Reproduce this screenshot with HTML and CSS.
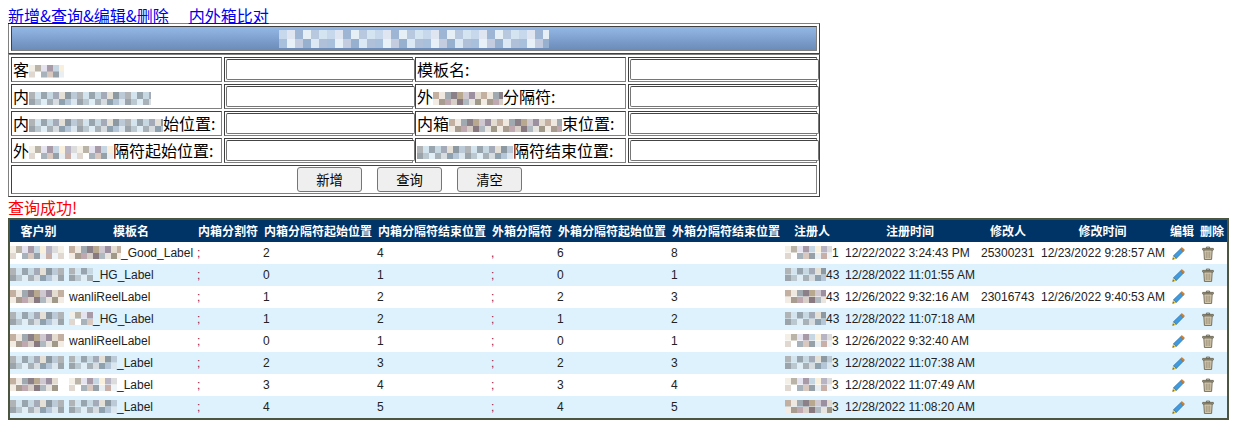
FILE: index.html
```html
<!DOCTYPE html>
<html lang="zh">
<head>
<meta charset="utf-8">
<title>内外箱标签</title>
<link rel="stylesheet" href="styles.css">
</head>
<body>
<svg class="defs" width="0" height="0" aria-hidden="true">
  <symbol id="pencil" viewBox="0 0 13 13">
    <path d="M.6 12.4 L1.6 8.6 L4.4 11.4 Z" fill="#f2d23c" stroke="#a88a20" stroke-width=".5"/>
    <path d="M1.6 8.6 L8.6 1.8 L11.2 4.4 L4.4 11.4 Z" fill="#3f9be0" stroke="#2a6ea8" stroke-width=".6"/>
    <path d="M8.6 1.8 L10 .5 L12.5 3 L11.2 4.4 Z" fill="#d9822b" stroke="#8f5a22" stroke-width=".5"/>
    <path d="M.6 12.4 L1 10.9 L2.1 12 Z" fill="#3a3a3a"/>
  </symbol>
  <symbol id="trash" viewBox="0 0 12 14">
    <path d="M4.4 1 H7.6 V2.4 H4.4 Z" fill="#e6dcc4" stroke="#55503f" stroke-width=".7"/>
    <path d="M.7 2.4 H11.3 V4 H.7 Z" fill="#d8ccb0" stroke="#55503f" stroke-width=".8"/>
    <path d="M1.8 4 H10.2 L9.6 13.4 H2.4 Z" fill="#dacfb4" stroke="#55503f" stroke-width=".8"/>
    <path d="M4.2 5.5 V12 M6 5.5 V12 M7.8 5.5 V12" stroke="#8a8068" stroke-width=".8" fill="none"/>
  </symbol>
</svg>

<nav class="links"><a href="#">新增&amp;查询&amp;编辑&amp;删除</a><a href="#">内外箱比对</a></nav>

<table class="form-box title-box">
  <tr><th class="title"><span class="mosaic m-title"></span></th></tr>
</table>

<table class="form-box">
  <colgroup><col class="c-label"><col class="c-input"><col class="c-label"><col class="c-input"></colgroup>
  <tr>
    <td>客<span class="mosaic m1 w35"></span></td><td><input type="text"></td>
    <td>模板名:</td><td><input type="text"></td>
  </tr>
  <tr>
    <td>内<span class="mosaic m2 w122"></span></td><td><input type="text"></td>
    <td>外<span class="mosaic m3 w70"></span>分隔符:</td><td><input type="text"></td>
  </tr>
  <tr>
    <td>内<span class="mosaic m2 w134"></span>始位置:</td><td><input type="text"></td>
    <td>内箱<span class="mosaic m3 w113"></span>束位置:</td><td><input type="text"></td>
  </tr>
  <tr>
    <td>外<span class="mosaic m1 w84"></span>隔符起始位置:</td><td><input type="text"></td>
    <td><span class="mosaic m2 w96"></span>隔符结束位置:</td><td><input type="text"></td>
  </tr>
  <tr>
    <td colspan="4" class="actions">
      <div class="btn-row"><button type="button">新增</button><button type="button">查询</button><button type="button">清空</button></div>
    </td>
  </tr>
</table>

<p class="status">查询成功!</p>

<table class="grid">
  <colgroup>
    <col class="g0"><col class="g1"><col class="g2"><col class="g3"><col class="g3"><col class="g2"><col class="g3"><col class="g3"><col class="g8"><col class="g9"><col class="g10"><col class="g11"><col class="g12"><col class="g13">
  </colgroup>
  <thead>
    <tr><th>客户别</th><th>模板名</th><th>内箱分割符</th><th>内箱分隔符起始位置</th><th>内箱分隔符结束位置</th><th>外箱分隔符</th><th>外箱分隔符起始位置</th><th>外箱分隔符结束位置</th><th>注册人</th><th>注册时间</th><th>修改人</th><th>修改时间</th><th>编辑</th><th>删除</th></tr>
  </thead>
  <tbody>
    <tr><td><span class="mosaic m1 w54"></span></td><td><span class="mosaic m3 w52"></span>_Good_Label</td><td class="sep">;</td><td>2</td><td>4</td><td class="sep">,</td><td>6</td><td>8</td><td><span class="mosaic m1 w47"></span>1</td><td>12/22/2022 3:24:43 PM</td><td>25300231</td><td>12/23/2022 9:28:57 AM</td><td><svg class="ic-pencil"><use href="#pencil"/></svg></td><td><svg class="ic-trash"><use href="#trash"/></svg></td></tr>
    <tr><td><span class="mosaic m2 w54"></span></td><td><span class="mosaic m2 w24"></span>_HG_Label</td><td class="sep">;</td><td>0</td><td>1</td><td class="sep">;</td><td>0</td><td>1</td><td><span class="mosaic m2 w41"></span>43</td><td>12/28/2022 11:01:55 AM</td><td></td><td></td><td><svg class="ic-pencil"><use href="#pencil"/></svg></td><td><svg class="ic-trash"><use href="#trash"/></svg></td></tr>
    <tr><td><span class="mosaic m3 w54"></span></td><td>wanliReelLabel</td><td class="sep">;</td><td>1</td><td>2</td><td class="sep">;</td><td>2</td><td>3</td><td><span class="mosaic m3 w41"></span>43</td><td>12/26/2022 9:32:16 AM</td><td>23016743</td><td>12/26/2022 9:40:53 AM</td><td><svg class="ic-pencil"><use href="#pencil"/></svg></td><td><svg class="ic-trash"><use href="#trash"/></svg></td></tr>
    <tr><td><span class="mosaic m2 w54"></span></td><td><span class="mosaic m1 w24"></span>_HG_Label</td><td class="sep">;</td><td>1</td><td>2</td><td class="sep">;</td><td>1</td><td>2</td><td><span class="mosaic m2 w41"></span>43</td><td>12/28/2022 11:07:18 AM</td><td></td><td></td><td><svg class="ic-pencil"><use href="#pencil"/></svg></td><td><svg class="ic-trash"><use href="#trash"/></svg></td></tr>
    <tr><td><span class="mosaic m3 w54"></span></td><td>wanliReelLabel</td><td class="sep">;</td><td>0</td><td>1</td><td class="sep">;</td><td>0</td><td>1</td><td><span class="mosaic m1 w47"></span>3</td><td>12/26/2022 9:32:40 AM</td><td></td><td></td><td><svg class="ic-pencil"><use href="#pencil"/></svg></td><td><svg class="ic-trash"><use href="#trash"/></svg></td></tr>
    <tr><td><span class="mosaic m2 w54"></span></td><td><span class="mosaic m2 w48"></span>_Label</td><td class="sep">;</td><td>2</td><td>3</td><td class="sep">;</td><td>2</td><td>3</td><td><span class="mosaic m2 w47"></span>3</td><td>12/28/2022 11:07:38 AM</td><td></td><td></td><td><svg class="ic-pencil"><use href="#pencil"/></svg></td><td><svg class="ic-trash"><use href="#trash"/></svg></td></tr>
    <tr><td><span class="mosaic m3 w48"></span></td><td><span class="mosaic m1 w48"></span>_Label</td><td class="sep">;</td><td>3</td><td>4</td><td class="sep">;</td><td>3</td><td>4</td><td><span class="mosaic m1 w47"></span>3</td><td>12/28/2022 11:07:49 AM</td><td></td><td></td><td><svg class="ic-pencil"><use href="#pencil"/></svg></td><td><svg class="ic-trash"><use href="#trash"/></svg></td></tr>
    <tr><td><span class="mosaic m2 w54"></span></td><td><span class="mosaic m2 w48"></span>_Label</td><td class="sep">;</td><td>4</td><td>5</td><td class="sep">;</td><td>4</td><td>5</td><td><span class="mosaic m3 w47"></span>3</td><td>12/28/2022 11:08:20 AM</td><td></td><td></td><td><svg class="ic-pencil"><use href="#pencil"/></svg></td><td><svg class="ic-trash"><use href="#trash"/></svg></td></tr>
  </tbody>
</table>
</body>
</html>
```

FILE: styles.css
```css
body {
  margin: 8px;
  font-family: "Noto Sans CJK SC", "Liberation Sans", sans-serif;
  font-size: 16px;
  line-height: 15px;
  color: #000;
  background: #fff;
}
.defs { position: absolute; }

.links { height: 15px; white-space: nowrap; }
.links a { color: #0000ee; text-decoration: underline; margin-right: 20px; }

.form-box {
  width: 812px;
  table-layout: fixed;
  border-collapse: separate;
  border-spacing: 2px;
  border: 1px solid;
  border-color: #808080 #404040 #404040 #808080;
}
.title-box { height: 30px; }
.form-box td, .form-box th {
  padding: 1px;
  border: 1px solid;
  border-color: #404040 #808080 #808080 #404040;
  height: 21px;
  white-space: nowrap;
  overflow: visible;
  box-sizing: content-box;
}
.form-box .title {
  height: 21px;
  text-align: center;
  background: linear-gradient(#94b8e6, #6b8bb8);
}
.c-label { width: 211px; }
.c-input { width: 189px; }
.form-box input {
  display: block;
  box-sizing: border-box;
  width: 189px;
  height: 21px;
  margin: 0;
  padding: 1px 2px;
  border: 1px solid #767676;
  border-top-color: #444;
  border-radius: 2px;
  background: #fff;
}
.form-box .actions { height: 25px; }
.btn-row {
  display: flex;
  justify-content: center;
  gap: 15px;
  padding-right: 9px;
}
button {
  width: 65px;
  height: 25px;
  padding: 0;
  font: 13.33px "Noto Sans CJK SC", sans-serif;
  color: #000;
  background: #efefef;
  border: 1px solid #767676;
  border-radius: 3px;
}

.status {
  margin: 0;
  height: 21px;
  line-height: 21px;
  color: #ff0000;
}

.grid {
  width: 1221px;
  table-layout: fixed;
  border-collapse: separate;
  border-spacing: 0;
  border: 2px solid #4b5540;
  font-family: "Liberation Sans", "Noto Sans CJK SC", sans-serif;
  font-size: 12px;
  line-height: 14px;
  color: #222;
}
.grid th, .grid td {
  height: 22px;
  padding: 0 2px;
  box-sizing: border-box;
  white-space: nowrap;
  vertical-align: middle;
}
.grid th {
  background: #003366;
  color: #fff;
  font-family: "Noto Sans CJK SC", sans-serif;
  font-weight: 700;
  text-align: center;
}
.grid th:nth-child(n+9) { padding: 0 4px 0 2px; }
.grid td { text-align: left; overflow: hidden; }
.grid td:first-child { padding-left: 0; }
.grid tbody tr:nth-child(even) td { background: #def2fd; }
.grid .sep { color: #8b1a4a; }
.g0 { width: 57px; }
.g1 { width: 128px; }
.g2 { width: 66px; }
.g3 { width: 114px; }
.g8 { width: 60px; }
.g9 { width: 136px; }
.g10 { width: 60px; }
.g11 { width: 129px; }
.g12 { width: 30px; }
.g13 { width: 29px; }

.ic-pencil { display: block; width: 13px; height: 13px; margin-left: 2px; }
.ic-trash { display: block; width: 12px; height: 14px; margin-left: 2px; }

.mosaic {
  display: inline-block;
  height: 13px;
  vertical-align: -2px;
  background-repeat: repeat-x;
  background-size: 48px 50%;
  background-position: 0 0, 0 100%;
}
.m1 {
  background-image:
    linear-gradient(90deg, #f4efe6 0 6px, #b9b3a8 6px 12px, #e6e3f0 12px 18px, #a89aa6 18px 24px, #c6d6e2 24px 30px, #f8f0dc 30px 36px, #b8b4c4 36px 42px, #dcdcdc 42px 48px),
    linear-gradient(90deg, #e0d8d0 0 6px, #fff 6px 12px, #a8b2ba 12px 18px, #d8c8c0 18px 24px, #96a0a8 24px 30px, #e8eef2 30px 36px, #c8b0a8 36px 42px, #eef4f8 42px 48px);
}
.m2 {
  background-image:
    linear-gradient(90deg, #b0b4b6 0 6px, #d4e4ee 6px 12px, #98a4ae 12px 18px, #c8d8e2 18px 24px, #a4aab8 24px 30px, #e4e0d8 30px 36px, #8c98a2 36px 42px, #bccad8 42px 48px),
    linear-gradient(90deg, #9aa4aa 0 6px, #bcc8d0 6px 12px, #e2eef6 12px 18px, #a8b0b8 18px 24px, #d6dce0 24px 30px, #8fa0ae 30px 36px, #b4c6d8 36px 42px, #dce6ee 42px 48px);
}
.m3 {
  background-image:
    linear-gradient(90deg, #c4b0a0 0 6px, #eee8e0 6px 12px, #a0a8b0 12px 18px, #8c8088 18px 24px, #b8a890 24px 30px, #d0c8d0 30px 36px, #9c90a0 36px 42px, #e4dcd0 42px 48px),
    linear-gradient(90deg, #f2ece4 0 6px, #a89c90 6px 12px, #c0a8b0 12px 18px, #d8d0c8 18px 24px, #887880 24px 30px, #b0b8c0 30px 36px, #e8e4e0 36px 42px, #a09888 42px 48px);
}
.m-title {
  width: 270px;
  height: 18px;
  vertical-align: middle;
  background-image:
    linear-gradient(90deg, #c8d8ec 0 8px, #dfe6f2 8px 16px, #9fb5d4 16px 24px, #e6eef6 24px 32px, #b8c8de 32px 40px, #d4e4f0 40px 48px),
    linear-gradient(90deg, #a8c0dc 0 8px, #e8f0f8 8px 16px, #c4cce0 16px 24px, #98b0d0 24px 32px, #dce8f4 32px 40px, #b0c0d8 40px 48px);
}
.w24 { width: 24px; }
.w35 { width: 35px; }
.w41 { width: 41px; }
.w47 { width: 47px; }
.w48 { width: 48px; }
.w52 { width: 52px; }
.w54 { width: 54px; }
.w70 { width: 70px; }
.w84 { width: 84px; }
.w96 { width: 96px; }
.w113 { width: 113px; }
.w122 { width: 122px; }
.w134 { width: 134px; }
```
